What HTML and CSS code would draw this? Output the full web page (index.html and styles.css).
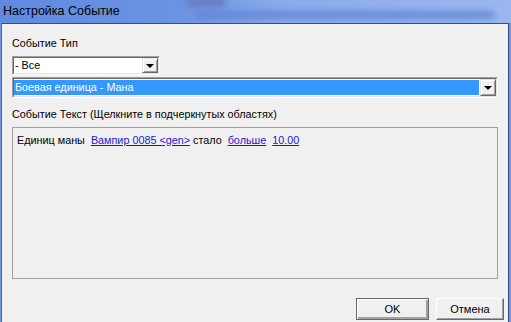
FILE: index.html
```html
<!DOCTYPE html>
<html lang="ru">
<head>
  <meta charset="UTF-8" />
  <title>Настройка Событие</title>
  <link rel="stylesheet" href="styles.css">
</head>
<body>
<div class="window">
  <div class="titlebar">
    <span class="smudge smudge-a"></span>
    <span class="smudge smudge-b"></span>
    <span class="title">Настройка Событие</span>
  </div>

  <div class="client">
    <div class="label">Событие Тип</div>
    <div class="combo combo-small">
      <div class="field">
        <span class="value">- Все</span>
        <span class="drop"><i></i></span>
      </div>
    </div>
    <div class="combo combo-wide">
      <div class="field">
        <span class="value selected">Боевая единица - Мана</span>
        <span class="drop"><i></i></span>
      </div>
    </div>

    <div class="label label-text">Событие Текст (Щелкните в подчеркнутых областях)</div>
    <div class="panel">Единиц маны&nbsp; <a href="#">Вампир 0085 &lt;gen&gt;</a> стало&nbsp; <a href="#">больше</a>&nbsp; <a href="#">10.00</a></div>

    <div class="buttons">
      <button class="btn btn-default">OK</button>
      <button class="btn">Отмена</button>
    </div>
  </div>
</div>
</body>
</html>
```

FILE: styles.css
```css
body {
  margin: 0;
  width: 511px;
  height: 322px;
  overflow: hidden;
  font-family: "Liberation Sans", Arial, sans-serif;
  font-size: 10.8px;
  color: #000;
  background: #6f95e2;
}
.window {
  display: flex;
  flex-direction: column;
  height: 322px;
}
.titlebar {
  position: relative;
  height: 23px;
  overflow: hidden;
  background: linear-gradient(90deg, #5f8ae0 0%, #6b93e3 35%, #8aaaea 55%, #93b2ee 80%, #9ab7ef 100%);
}
.title {
  position: relative;
  display: block;
  padding: 4px 0 0 3px;
  font-size: 12.5px;
  line-height: 15px;
  color: #000;
}
.smudge {
  position: absolute;
  border-radius: 6px;
  filter: blur(3px);
}
.smudge-a {
  left: 186px;
  top: -4px;
  width: 40px;
  height: 12px;
  background: #6a7fc4;
}
.smudge-b {
  left: 195px;
  top: 11px;
  width: 300px;
  height: 8px;
  background: #5d82d4;
  opacity: 0.8;
}
.client {
  flex: 1;
  display: flex;
  flex-direction: column;
  margin: 0 2px 0 1px;
  padding: 13px 4px 0 10px;
  background: #f0f0f0;
  border: 1px solid #3a4d78;
  border-bottom: none;
  border-left-color: #4b67b0;
}
.label {
  line-height: 13px;
  margin-bottom: 6px;
}
.label-text {
  margin: 10px 0 6px;
}
.combo {
  border: 1px solid;
  border-color: #a0a0a0 #ffffff #ffffff #a0a0a0;
  box-sizing: border-box;
}
.combo-small {
  width: 148px;
  height: 19px;
  margin-bottom: 2px;
}
.combo-wide {
  width: 486px;
  height: 21px;
}
.field {
  display: flex;
  height: 100%;
  box-sizing: border-box;
  border: 1px solid;
  border-color: #696969 #e3e3e3 #e3e3e3 #696969;
  background: #fff;
}
.value {
  flex: 1;
  padding-left: 1px;
  line-height: 15px;
  white-space: nowrap;
}
.value.selected {
  margin: 1px 1px 1px 0;
  line-height: 15px;
  background: #3399ff;
  color: #fff;
}
.drop {
  display: flex;
  align-items: center;
  justify-content: center;
  width: 16px;
  box-sizing: border-box;
  background: #f0f0f0;
  border: 1px solid;
  border-color: #e3e3e3 #696969 #696969 #e3e3e3;
  box-shadow: inset 1px 1px #fff, inset -1px -1px #a0a0a0;
}
.drop i {
  width: 0;
  height: 0;
  border-left: 4px solid transparent;
  border-right: 4px solid transparent;
  border-top: 4px solid #000;
  margin-top: 1px;
}
.panel {
  width: 486px;
  height: 152px;
  box-sizing: border-box;
  padding: 6px 4px;
  line-height: 13px;
  border: 1px solid #a0a0a0;
  white-space: nowrap;
}
.panel a {
  color: #1a1acc;
  text-decoration: underline;
}
.buttons {
  display: flex;
  justify-content: flex-end;
  gap: 7px;
  margin-top: 19px;
}
.btn {
  height: 22px;
  padding: 0;
  font-family: "Liberation Sans", Arial, sans-serif;
  font-size: 11px;
  background: #f0f0f0;
  border: 1px solid;
  border-color: #fff #696969 #696969 #fff;
  box-shadow: inset -1px -1px #a0a0a0;
  width: 68px;
}
.btn-default {
  width: 73px;
  border-color: #696969;
  box-shadow: inset 1px 1px #fff, inset -2px -2px #a0a0a0;
}
```
